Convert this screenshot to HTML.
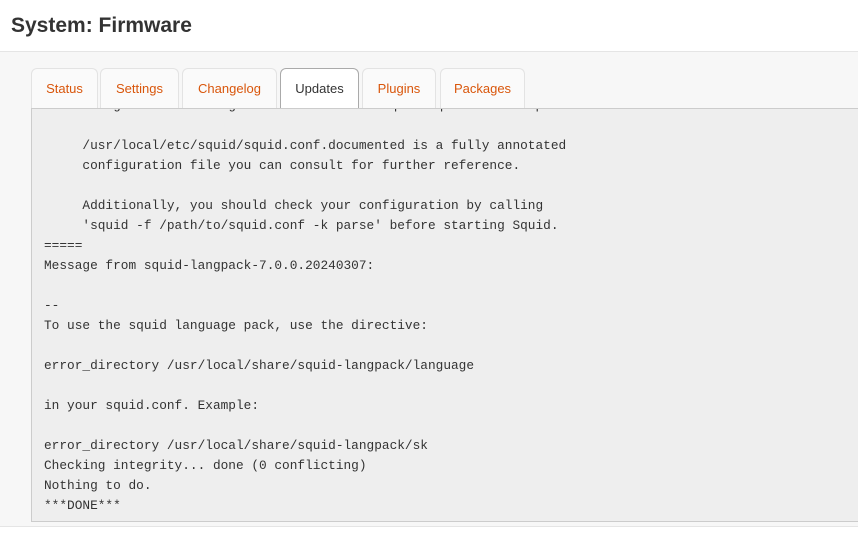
<!DOCTYPE html>
<html><head><style>
body{margin:0;width:858px;height:546px;overflow:hidden;background:#f7f7f7;font-family:"Liberation Sans",sans-serif;position:relative}
.hdr{position:absolute;left:0;top:0;width:858px;height:51px;background:#fff;border-bottom:1px solid #e5e5e5}
.hdr h1{margin:0;position:absolute;left:11px;top:14px;font-size:21px;font-weight:bold;color:#333}
.tab{position:absolute;top:68px;height:40px;background:#fafafa;border:1px solid #e3e3e3;border-bottom:none;border-radius:6px 6px 0 0;box-sizing:border-box;font-size:13px;color:#d9560b;text-align:center;line-height:40px}
.tab.a{background:#fff;border-color:#aaa;color:#333;height:41px}
.pre{position:absolute;left:31px;top:108px;width:840px;height:414px;background:#eee;border:1px solid #ccc;box-sizing:border-box;overflow:hidden}
.pre pre{margin:0;position:absolute;left:12px;top:-13px;font-family:"Liberation Mono",monospace;font-size:12.8px;line-height:20px;color:#333}
.foot{position:absolute;left:0;top:526px;width:858px;height:20px;background:#fff;border-top:1px solid #e5e5e5}
</style></head><body>
<div class="hdr"><h1>System: Firmware</h1></div>
<div class="tab" style="left:31px;width:67px">Status</div>
<div class="tab" style="left:100px;width:79px">Settings</div>
<div class="tab" style="left:182px;width:95px">Changelog</div>
<div class="tab a" style="left:280px;width:79px">Updates</div>
<div class="tab" style="left:362px;width:74px">Plugins</div>
<div class="tab" style="left:440px;width:85px">Packages</div>
<div class="pre"><pre>     the generated config at /usr/local/etc/squid/squid.conf.sample

     /usr/local/etc/squid/squid.conf.documented is a fully annotated
     configuration file you can consult for further reference.

     Additionally, you should check your configuration by calling
     'squid -f /path/to/squid.conf -k parse' before starting Squid.
=====
Message from squid-langpack-7.0.0.20240307:

--
To use the squid language pack, use the directive:

error_directory /usr/local/share/squid-langpack/language

in your squid.conf. Example:

error_directory /usr/local/share/squid-langpack/sk
Checking integrity... done (0 conflicting)
Nothing to do.
***DONE***</pre></div>
<div class="foot"></div>
</body></html>
